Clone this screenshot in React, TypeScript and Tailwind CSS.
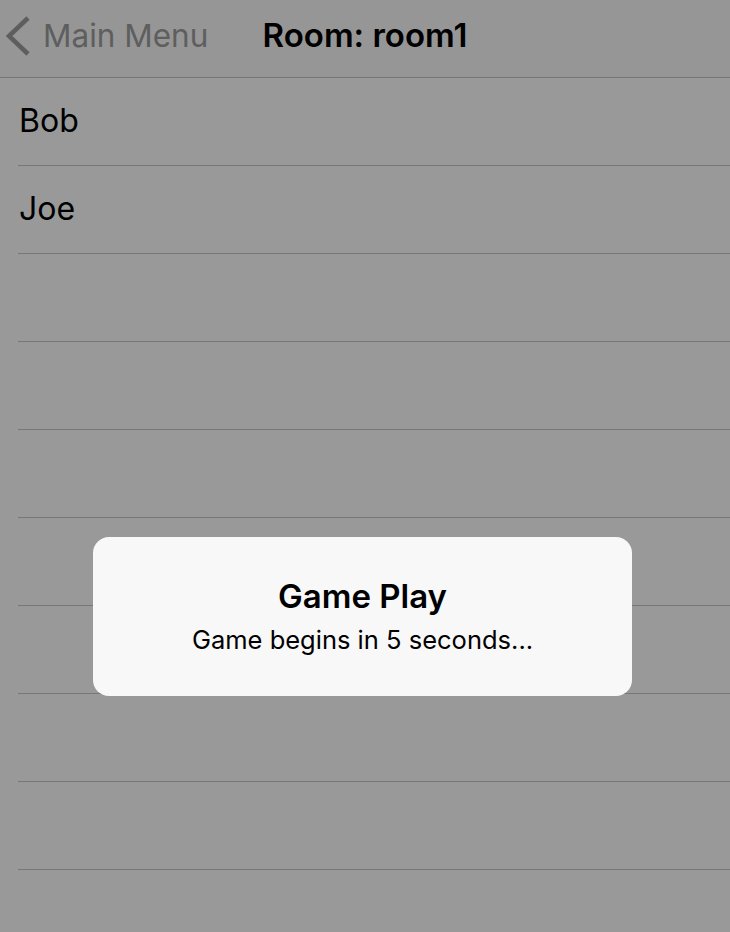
import React from "react";

export default function App() {
  const rows = ["Bob", "Joe", "", "", "", "", "", "", "", ""];
  return (
    <div
      className="relative w-[730px] h-[932px] overflow-hidden bg-[#999999]"
      style={{ fontFamily: "Inter, 'Liberation Sans', sans-serif" }}
    >
      <div className="h-[78px] border-b border-[#767676] bg-[#969696] relative flex items-center">
        <div className="flex items-center pl-[5px] pb-[6px]">
          <svg width="26" height="42" viewBox="0 0 26 42" className="mr-[12px]">
            <polyline
              points="23,3 4,21 23,39"
              fill="none"
              stroke="#5e5e5e"
              strokeWidth="4.5"
              strokeLinecap="butt"
              strokeLinejoin="miter"
            />
          </svg>
          <span className="text-[31.5px] text-[#5e5e5e] leading-none">Main Menu</span>
        </div>
        <div className="absolute left-0 right-0 top-0 h-[78px] flex items-center justify-center pb-[7px]">
          <span className="text-[33px] font-semibold text-black leading-none ml-[0px]">Room: room1</span>
        </div>
      </div>
      <div className="flex flex-col">
        {rows.map((r, i) => (
          <div key={i} className="h-[88px] pl-[18px] flex">
            <div className="flex-1 border-b border-[#777777] flex items-center pb-[0px]">
              <span className="text-[32px] text-black leading-none pl-[1px] -mt-[2px]">{r}</span>
            </div>
          </div>
        ))}
      </div>
      <div className="absolute left-[93px] top-[537px] w-[539px] h-[159px] rounded-[16px] bg-[#f8f8f8] flex flex-col items-center justify-center pt-[0px]">
        <div className="text-[33px] font-semibold text-black leading-none">Game Play</div>
        <div className="text-[25.5px] text-black leading-none mt-[14px]">Game begins in 5 seconds...</div>
      </div>
    </div>
  );
}
